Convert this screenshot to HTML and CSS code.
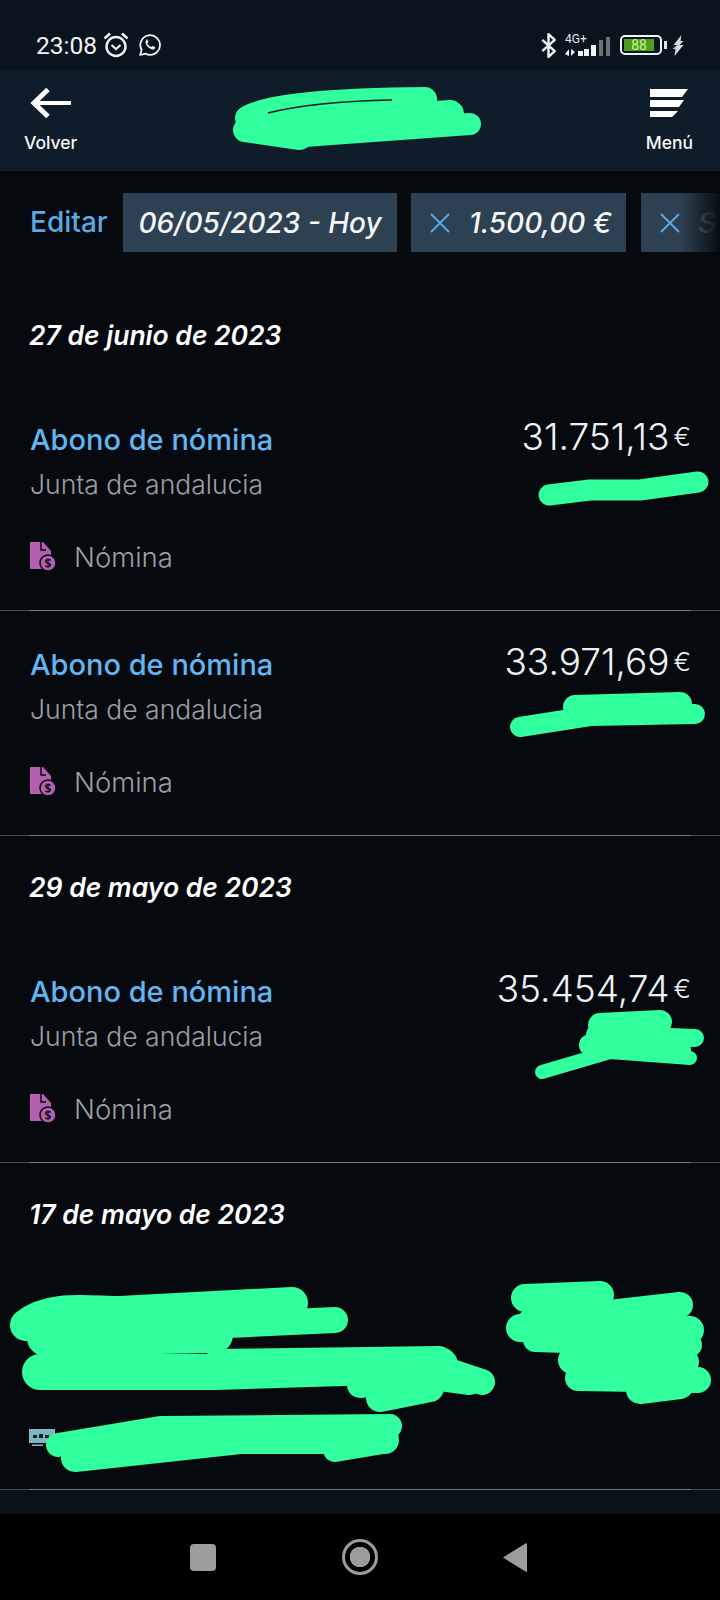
FILE: index.html
```html
<!DOCTYPE html>
<html lang="es">
<head>
<meta charset="utf-8">
<title>Movimientos</title>
<link rel="stylesheet" href="styles.css">
</head>
<body>
<div class="screen">
  <div class="status">
    <div class="status-left">
      <span class="time">23:08</span>
      <svg class="ic-alarm" viewBox="0 0 28 28"><circle cx="14" cy="15.500" r="9.500" fill="none" stroke="#f1f3f4" stroke-width="2.400"/><path d="M9.500 14l4.500 4 4.500-4" fill="none" stroke="#f1f3f4" stroke-width="2.200"/><path d="M2.500 7.500L8 2.500M25.500 7.500L20 2.500" fill="none" stroke="#f1f3f4" stroke-width="2.400"/></svg>
      <svg class="ic-wa" viewBox="0 0 24 24"><path d="M2.200 22l1.400-5.200A9.800 9.800 0 1 1 7.400 20.600z" fill="none" stroke="#f1f3f4" stroke-width="1.800" stroke-linejoin="round"/><path d="M8.600 6.900c-.9.700-1.400 1.700-1 3.200.9 3 3.200 5.300 6.200 6.300 1.500.4 2.700-.2 3.300-1.200.3-.6.200-1-.3-1.300l-1.800-.9c-.4-.2-.7-.1-1 .2l-.7.9c-2-.7-3.200-2-4-3.800l.7-.8c.3-.3.300-.6.200-1l-.8-1.900c-.2-.5-.4-.6-.8-.6z" fill="#f1f3f4"/></svg>
    </div>
    <div class="status-right">
      <svg class="ic-bt" viewBox="0 0 16 26"><path d="M2 7.500L14 18.500 8 24V2l6 5.500L2 18.500" fill="none" stroke="#f1f3f4" stroke-width="2.300" stroke-linejoin="round"/></svg>
      <div class="net">
        <span class="net-label">4G+</span>
        <svg class="ic-bars" viewBox="0 0 46 21"><path d="M0 19l4-5v7zM6 14l4 3-4 4z" fill="#f1f3f4"/><path d="M13 16h5v5h-5zM19 14h5v7h-5zM26 10h5v11h-5z" fill="#f1f3f4"/><path d="M34 5h4v16h-4zM41 2h4v19h-4z" fill="#6c7175"/></svg>
      </div>
      <div class="battery"><span class="battery-fill">88</span></div>
      <span class="battery-tip"></span>
      <svg class="ic-bolt" viewBox="0 0 12 21"><path d="M9 0L1 10l4 0-5 4 3 0-1 7 9-11-4 0 4-4-3 0z" fill="#d8dadc"/></svg>
    </div>
  </div>

  <header class="topbar">
    <div class="nav-item">
      <svg class="ic-back" viewBox="0 0 42 32"><path d="M41 16H5" stroke="#fff" stroke-width="4" fill="none"/><path d="M18 2.500L4 16l14 13.500" stroke="#fff" stroke-width="5" fill="none"/></svg>
      <span class="nav-label">Volver</span>
    </div>
    <div class="nav-item">
      <svg class="ic-menu" viewBox="0 0 38 28"><path d="M0 0h38l-6 8H0zM0 11h34l-5 7H0zM0 22h28l-6 6H0z" fill="#fff"/></svg>
      <span class="nav-label">Menú</span>
    </div>
  </header>

  <div class="filters">
    <span class="edit">Editar</span>
    <div class="chip chip-date">06/05/2023 - Hoy</div>
    <div class="chip chip-amount">
      <svg class="ic-x" viewBox="0 0 20 20"><path d="M1 1l18 18M19 1L1 19" stroke="#58a9e6" stroke-width="2" fill="none"/></svg>
      <span>1.500,00 €</span>
    </div>
    <div class="chip chip-more">
      <svg class="ic-x" viewBox="0 0 20 20"><path d="M1 1l18 18M19 1L1 19" stroke="#58a9e6" stroke-width="2" fill="none"/></svg>
      <span class="chip-faded">S</span>
    </div>
    <div class="fade"></div>
  </div>

  <main class="list">
    <h2 class="day">27 de junio de 2023</h2>
    <article class="row">
      <div class="row-left">
        <div class="row-title">Abono de nómina</div>
        <div class="row-sub">Junta de andalucia</div>
        <div class="row-tag">
          <svg class="ic-doc" viewBox="0 0 27 30"><path d="M0 0h13l8 9v18H0z" fill="#b45fb0"/><path d="M11 0v8h5" fill="none" stroke="#060a0f" stroke-width="1.500"/><circle cx="18" cy="21" r="8" fill="#b45fb0" stroke="#060a0f" stroke-width="1.500"/><text x="18" y="25.500" class="doc-sign">$</text></svg>
          <span>Nómina</span>
        </div>
      </div>
      <div class="amount">31.751,13<small>€</small></div>
    </article>
    <article class="row">
      <div class="row-left">
        <div class="row-title">Abono de nómina</div>
        <div class="row-sub">Junta de andalucia</div>
        <div class="row-tag">
          <svg class="ic-doc" viewBox="0 0 27 30"><path d="M0 0h13l8 9v18H0z" fill="#b45fb0"/><path d="M11 0v8h5" fill="none" stroke="#060a0f" stroke-width="1.500"/><circle cx="18" cy="21" r="8" fill="#b45fb0" stroke="#060a0f" stroke-width="1.500"/><text x="18" y="25.500" class="doc-sign">$</text></svg>
          <span>Nómina</span>
        </div>
      </div>
      <div class="amount">33.971,69<small>€</small></div>
    </article>
    <h2 class="day">29 de mayo de 2023</h2>
    <article class="row">
      <div class="row-left">
        <div class="row-title">Abono de nómina</div>
        <div class="row-sub">Junta de andalucia</div>
        <div class="row-tag">
          <svg class="ic-doc" viewBox="0 0 27 30"><path d="M0 0h13l8 9v18H0z" fill="#b45fb0"/><path d="M11 0v8h5" fill="none" stroke="#060a0f" stroke-width="1.500"/><circle cx="18" cy="21" r="8" fill="#b45fb0" stroke="#060a0f" stroke-width="1.500"/><text x="18" y="25.500" class="doc-sign">$</text></svg>
          <span>Nómina</span>
        </div>
      </div>
      <div class="amount">35.454,74<small>€</small></div>
    </article>
    <h2 class="day">17 de mayo de 2023</h2>
    <article class="row row-hidden">
      <svg class="ic-card" viewBox="0 0 26 17"><path d="M0 0h26v14H0z" fill="#7fb6c4"/><path d="M4 6h4v3H4zM10 5h4v4h-4zM16 6h4v3h-4z" fill="#10202a"/><path d="M3 15.500h11v1.500H3z" fill="#7fb6c4"/></svg>
    </article>
  </main>

  <div class="footer-strip"></div>
  <nav class="softkeys">
    <span class="key-square"></span>
    <span class="key-circle"></span>
    <svg class="key-back" viewBox="0 0 24 29"><path d="M24 1v27a1 1 0 0 1-1.500.6L0 14.500 22.500.4A1 1 0 0 1 24 1z" fill="#9c9c9c"/></svg>
  </nav>

  <svg class="scribbles" viewBox="0 0 720 1600">
    <g fill="none" stroke="#31fe9d" stroke-linecap="round" stroke-linejoin="round">
      <path d="M247 118C270 104 340 100 425 99" stroke-width="24"/>
      <path d="M250 128L450 114" stroke-width="28"/>
      <path d="M245 130L300 138" stroke-width="24"/>
      <path d="M290 137L470 124" stroke-width="22"/>
      <path d="M549 495L590 490 640 490 698 482" stroke-width="21"/>
      <path d="M520 727L590 716 695 714" stroke-width="20"/>
      <path d="M575 707L680 704" stroke-width="24"/>
      <path d="M542 1072L610 1052 690 1058" stroke-width="14"/>
      <path d="M595 1034L695 1038" stroke-width="18"/>
      <path d="M600 1025L660 1022" stroke-width="24"/>
      <path d="M590 1045L680 1050" stroke-width="22"/>
      <path d="M26 1325C50 1305 90 1312 120 1312L292 1303" stroke-width="32"/>
      <path d="M120 1330L335 1320" stroke-width="26"/>
      <path d="M45 1338L215 1335" stroke-width="36"/>
      <path d="M40 1372L215 1372 440 1365" stroke-width="36"/>
      <path d="M215 1358L440 1355" stroke-width="18"/>
      <path d="M380 1398L430 1388" stroke-width="28"/>
      <path d="M360 1385L445 1375" stroke-width="26"/>
      <path d="M440 1368L482 1382" stroke-width="26"/>
      <path d="M440 1378L470 1382" stroke-width="26"/>
      <path d="M525 1298L600 1295" stroke-width="28"/>
      <path d="M530 1322L680 1305" stroke-width="26"/>
      <path d="M520 1328L690 1330" stroke-width="28"/>
      <path d="M535 1340L690 1345" stroke-width="24"/>
      <path d="M572 1360L685 1362" stroke-width="28"/>
      <path d="M578 1378L698 1380" stroke-width="26"/>
      <path d="M640 1390L680 1385" stroke-width="28"/>
      <path d="M58 1445L160 1428 390 1426" stroke-width="24"/>
      <path d="M75 1458L240 1440 385 1440" stroke-width="28"/>
      <path d="M335 1450L383 1442" stroke-width="24"/>
    </g>
    <path d="M268 113C300 105 340 101 392 100" stroke="#0c1823" stroke-width="1.500" fill="none"/>
  </svg>
</div>
</body>
</html>
```

FILE: styles.css
```css
* { box-sizing: border-box; }
html, body { margin: 0; padding: 0; background: #060a0f; }
.screen {
  position: relative;
  width: 720px;
  height: 1600px;
  overflow: hidden;
  display: flex;
  flex-direction: column;
  font-family: Inter, "Open Sans", sans-serif;
  color: #fff;
  background: #060a0f;
}
.status {
  height: 70px;
  flex: none;
  background: #0a141e;
  display: flex;
  align-items: center;
  justify-content: space-between;
  padding: 20px 35px 0 36px;
}
.status-left, .status-right { display: flex; align-items: center; }
.time { font-family: Roboto, sans-serif; font-size: 24.500px; color: #f1f3f4; }
.ic-alarm { width: 28px; height: 28px; margin-left: 5px; }
.ic-wa { width: 24px; height: 24px; margin-left: 8px; }
.ic-bt { width: 17px; height: 27px; margin-right: 8px; }
.net { width: 46px; display: flex; flex-direction: column; margin-right: 9px; }
.net-label { font-family: Roboto, sans-serif; font-size: 12px; line-height: 9px; color: #e6e8ea; }
.ic-bars { width: 46px; height: 21px; margin-top: -9px; }
.battery {
  width: 42px;
  height: 20px;
  border: 2px solid #f1f3f4;
  border-radius: 5px;
  padding: 2px 6px 2px 2px;
  display: flex;
}
.battery-fill {
  flex: 1;
  background: #4f9d1f;
  color: #c7f59b;
  font-family: Roboto, sans-serif;
  font-size: 14px;
  line-height: 12px;
  text-align: center;
}
.battery-tip { width: 3px; height: 8px; margin-left: 2px; background: #dfe1e3; }
.ic-bolt { width: 13px; height: 21px; margin-left: 5px; }

.topbar {
  height: 101px;
  flex: none;
  background: #0f1c29;
  display: flex;
  justify-content: space-between;
  padding: 17px 27px 0 24px;
}
.nav-item { display: flex; flex-direction: column; align-items: center; }
.ic-back { width: 42px; height: 32px; }
.ic-menu { width: 38px; height: 28px; margin: 2px 0; }
.nav-label { font-size: 17.500px; font-weight: 500; line-height: 24px; margin-top: 12px; color: #f4f6f8; }

.filters {
  position: relative;
  flex: none;
  height: 113px;
  padding: 22px 0 0 30px;
  display: flex;
  align-items: flex-start;
  overflow: hidden;
}
.edit { flex: none; width: 93px; font-size: 28px; font-weight: 500; line-height: 59px; color: #5aa9e6; }
.chip {
  height: 59px;
  flex: none;
  background: #2e4152;
  margin-right: 14px;
  font-size: 28px;
  font-style: italic;
  font-weight: 500;
  display: flex;
  align-items: center;
  white-space: nowrap;
  color: #f4f6f8;
}
.chip-date { width: 274px; justify-content: center; }
.chip-amount { width: 215px; padding-left: 19px; gap: 19px; margin-right: 15px; }
.chip-more { width: 79px; padding-left: 19px; gap: 18px; margin-right: 0; }
.chip-faded { color: #6b7680; }
.ic-x { width: 20px; height: 20px; flex: none; }
.fade {
  position: absolute;
  right: 0;
  top: 22px;
  width: 40px;
  height: 59px;
  background: linear-gradient(to right, rgba(6,10,15,0), rgba(6,10,15,.95));
}

.list { flex: none; display: flex; flex-direction: column; }
.day {
  margin: 0;
  height: 102px;
  padding: 0 29px 33px;
  display: flex;
  align-items: flex-end;
  font-size: 26.500px;
  font-style: italic;
  font-weight: 600;
  line-height: 36px;
  color: #fff;
}
.row {
  position: relative;
  height: 225px;
  padding: 34px 29px 0 30px;
  display: flex;
  justify-content: space-between;
  border-bottom: 1px solid #434f52;
}
.row::after {
  content: "";
  position: absolute;
  left: 29px;
  right: 29px;
  bottom: -1px;
  height: 1px;
  background: #6d7c80;
}
.row-left { display: flex; flex-direction: column; }
.row-title { font-size: 29px; font-weight: 500; line-height: 40px; color: #64b4f0; }
.row-sub { font-size: 26.500px; font-weight: 300; line-height: 40px; margin-top: 4px; color: #9aa0a3; }
.row-tag {
  display: flex;
  align-items: center;
  margin-top: 32px;
  font-size: 27.500px;
  font-weight: 300;
  line-height: 42px;
  color: #9aa0a3;
}
.ic-doc { width: 27px; height: 30px; margin-right: 17px; }
.doc-sign { font-family: "Open Sans", sans-serif; font-size: 12px; text-anchor: middle; fill: #17101a; font-weight: 700; }
.amount {
  font-size: 37px;
  font-weight: 300;
  line-height: 38px;
  margin-top: -2px;
  color: #eef1f4;
}
.amount small { font-size: 26px; margin-left: 4px; vertical-align: 4px; }
.ic-card { position: absolute; left: 29px; top: 164px; width: 26px; height: 17px; }

.footer-strip { height: 24px; flex: none; background: #0a1118; }
.softkeys {
  flex: 1;
  background: #000;
  display: flex;
  align-items: center;
  padding: 0 193px 0 190px;
  justify-content: space-between;
}
.key-square { width: 26px; height: 27px; border-radius: 4px; background: #9c9c9c; }
.key-circle {
  width: 36px;
  height: 36px;
  border-radius: 50%;
  border: 3px solid #9c9c9c;
  padding: 5px;
  background: radial-gradient(circle, #9c9c9c 0 10px, transparent 10.500px);
}
.key-back { width: 24px; height: 29px; }
.scribbles { position: absolute; left: 0; top: 0; width: 720px; height: 1600px; pointer-events: none; }
```
